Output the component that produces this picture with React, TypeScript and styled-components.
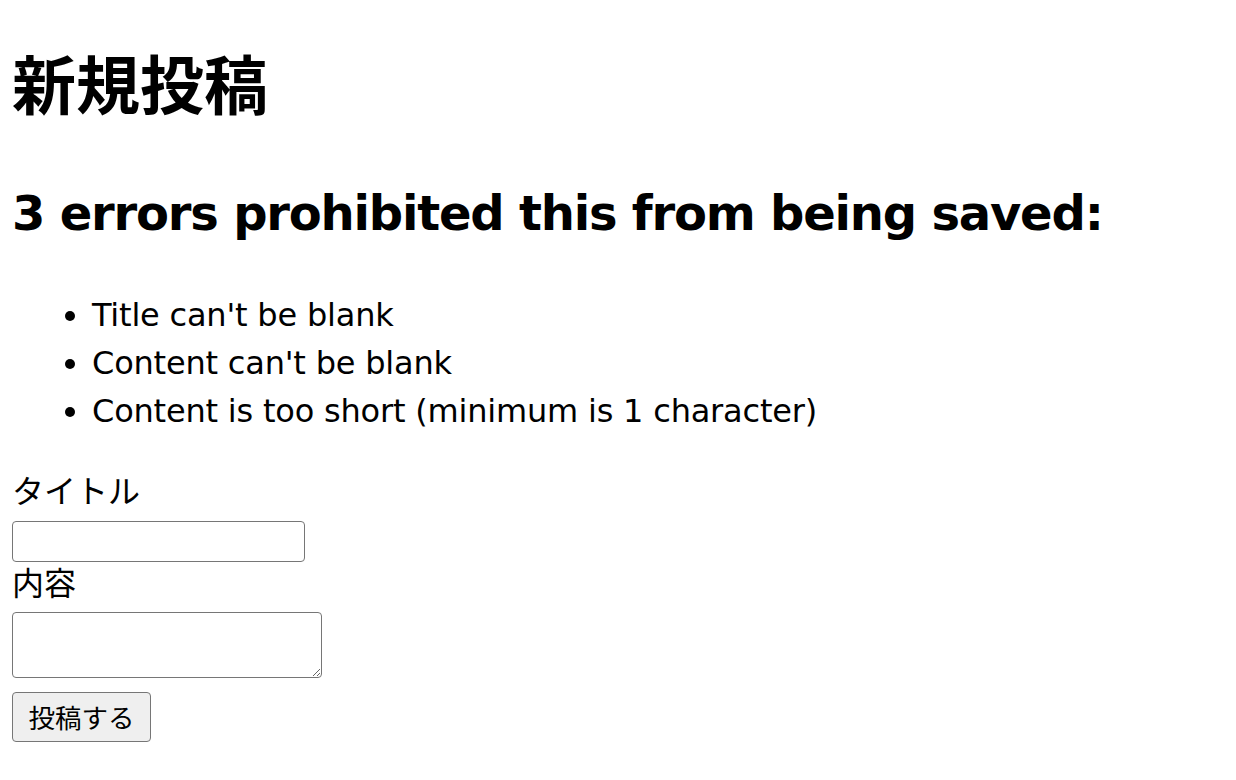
import styled, { createGlobalStyle } from 'styled-components'

const GlobalStyle = createGlobalStyle`
  body {
    margin: 12px;
    background: #fff;
    color: #000;
    font-family: 'DejaVu Sans', 'Noto Sans CJK JP', sans-serif;
    font-size: 32px;
    line-height: 1.5;
  }
`

const Title = styled.h1`
  font-family: 'Noto Sans CJK JP', sans-serif;
  font-size: 64px;
  font-weight: 700;
  margin: 21px 0 48px;
  line-height: 96px;
`

const ErrorHeading = styled.h2`
  font-size: 48px;
  font-weight: 700;
  letter-spacing: -1.2px;
  margin: 0 0 42px;
  line-height: 72px;
`

const ErrorList = styled.ul`
  margin: 0 0 35px;
  padding-left: 80px;
  letter-spacing: -0.2px;

  li {
    line-height: 48px;
  }
`

const Form = styled.form`
  display: flex;
  flex-direction: column;
  align-items: flex-start;
`

const Field = styled.div`
  display: flex;
  flex-direction: column;
  align-items: flex-start;
`

const Label = styled.label`
  font-family: 'Noto Sans CJK JP', sans-serif;
  line-height: 38px;
  padding-bottom: 10px;
`

const TextInput = styled.input`
  box-sizing: border-box;
  width: 293px;
  height: 41px;
  margin: 3px 0 0;
  border: 1px solid #767676;
  border-radius: 4px;
  background: #fff;
  font-size: 26px;
  padding: 2px 4px;
`

const TextArea = styled.textarea`
  box-sizing: border-box;
  width: 310px;
  height: 66px;
  margin: 2px 0 0;
  border: 1px solid #767676;
  border-radius: 4px;
  background: #fff;
  font-size: 26px;
  padding: 2px 4px;
`

const SubmitButton = styled.button`
  box-sizing: border-box;
  width: 139px;
  height: 50px;
  margin-top: 14px;
  border: 1px solid #767676;
  border-radius: 4px;
  background: #efefef;
  color: #000;
  font-family: 'Noto Sans CJK JP', sans-serif;
  font-size: 26.5px;
  line-height: 1;
  padding: 0 12px;
`

const ERRORS = [
  "Title can't be blank",
  "Content can't be blank",
  'Content is too short (minimum is 1 character)',
]

function App() {
  return (
    <>
      <GlobalStyle />
      <Title>新規投稿</Title>
      <ErrorHeading>3 errors prohibited this from being saved:</ErrorHeading>
      <ErrorList>
        {ERRORS.map((message) => (
          <li key={message}>{message}</li>
        ))}
      </ErrorList>
      <Form onSubmit={(e) => e.preventDefault()}>
        <Field>
          <Label htmlFor="post_title">タイトル</Label>
          <TextInput id="post_title" type="text" />
        </Field>
        <Field>
          <Label htmlFor="post_content">内容</Label>
          <TextArea id="post_content" />
        </Field>
        <SubmitButton type="submit">投稿する</SubmitButton>
      </Form>
    </>
  )
}

export default App
